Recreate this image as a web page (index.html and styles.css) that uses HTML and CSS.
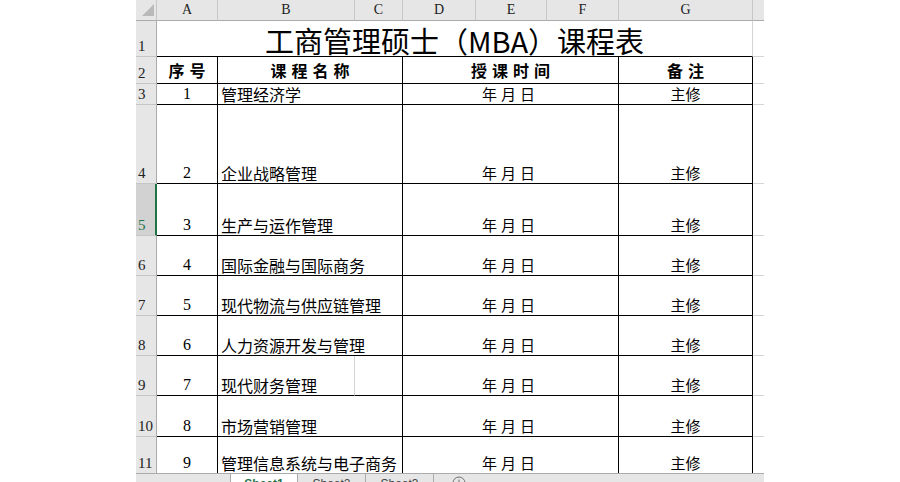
FILE: index.html
```html
<!DOCTYPE html>
<html lang="zh-CN">
<head>
<meta charset="utf-8">
<title>工商管理硕士（MBA）课程表</title>
<link rel="stylesheet" href="styles.css">
</head>
<body>
<div class="page">
  <div class="sheet">
    <div class="grid">
      <div class="corner"><svg width="12" height="12" viewBox="0 0 12 12"><polygon points="12,0 12,12 0,12" fill="#b9b9b9"/></svg></div>
      <div class="ch">A</div><div class="ch">B</div><div class="ch">C</div><div class="ch">D</div><div class="ch">E</div><div class="ch">F</div><div class="ch">G</div><div class="ch ch-h"></div>

      <div class="rh">1</div>
      <div class="title">工商管理硕士（MBA）课程表</div>
      <div class="gh"></div>

      <div class="rh">2</div>
      <div class="c hd">序号</div>
      <div class="c hd span2">课程名称</div>
      <div class="c hd span3">授课时间</div>
      <div class="c hd">备注</div>
      <div class="gh"></div>

      <div class="rh">3</div>
      <div class="c num">1</div>
      <div class="c name span2">管理经济学</div>
      <div class="c date span3">年月日</div>
      <div class="c note">主修</div>
      <div class="gh"></div>

      <div class="rh">4</div>
      <div class="c num">2</div>
      <div class="c name span2">企业战略管理</div>
      <div class="c date span3">年月日</div>
      <div class="c note">主修</div>
      <div class="gh"></div>

      <div class="rh sel">5</div>
      <div class="c num">3</div>
      <div class="c name span2">生产与运作管理</div>
      <div class="c date span3">年月日</div>
      <div class="c note">主修</div>
      <div class="gh"></div>

      <div class="rh">6</div>
      <div class="c num">4</div>
      <div class="c name span2">国际金融与国际商务</div>
      <div class="c date span3">年月日</div>
      <div class="c note">主修</div>
      <div class="gh"></div>

      <div class="rh">7</div>
      <div class="c num">5</div>
      <div class="c name span2">现代物流与供应链管理</div>
      <div class="c date span3">年月日</div>
      <div class="c note">主修</div>
      <div class="gh"></div>

      <div class="rh">8</div>
      <div class="c num">6</div>
      <div class="c name span2">人力资源开发与管理</div>
      <div class="c date span3">年月日</div>
      <div class="c note">主修</div>
      <div class="gh"></div>

      <div class="rh">9</div>
      <div class="c num">7</div>
      <div class="c name grid-right">现代财务管理</div>
      <div class="c"></div>
      <div class="c date span3">年月日</div>
      <div class="c note">主修</div>
      <div class="gh"></div>

      <div class="rh">10</div>
      <div class="c num">8</div>
      <div class="c name span2">市场营销管理</div>
      <div class="c date span3">年月日</div>
      <div class="c note">主修</div>
      <div class="gh"></div>

      <div class="rh">11</div>
      <div class="c num">9</div>
      <div class="c name span2">管理信息系统与电子商务</div>
      <div class="c date span3">年月日</div>
      <div class="c note">主修</div>
      <div class="gh"></div>
    </div>
  </div>
  <div class="tabbar">
    <div class="tab-spacer"></div>
    <div class="tab active">Sheet1</div>
    <div class="tab">Sheet2</div>
    <div class="tab">Sheet3</div>
    <div class="addtab"><svg width="14" height="14" viewBox="0 0 14 14"><circle cx="7" cy="7" r="6" fill="none" stroke="#6f6f6f" stroke-width="1"/><path d="M7 3.5v7M3.5 7h7" stroke="#6f6f6f" stroke-width="1"/></svg></div>
  </div>
</div>
</body>
</html>
```

FILE: styles.css
```css
html, body {
  margin: 0;
  padding: 0;
  background: #ffffff;
}
body {
  width: 900px;
  height: 482px;
  overflow: hidden;
  font-family: "Noto Sans CJK SC", sans-serif;
  color: #000;
}
.page {
  margin-left: 136px;
  width: 628px;
}
.sheet {
  height: 473px;
  overflow: hidden;
}
.grid {
  display: grid;
  grid-template-columns: 21px 61px 137px 48px 73px 71px 72px 134px 11px;
  grid-template-rows: 21px 36px 27px 21px 79px 52px 40px 40px 40px 40px 41px 37px;
}
.grid > div {
  box-sizing: border-box;
  white-space: nowrap;
}
.corner {
  background: #e6e6e6;
  border-right: 1px solid #c6c6c6;
  border-bottom: 1px solid #ababab;
  display: flex;
  align-items: flex-end;
  justify-content: flex-end;
  padding: 0 2px 4px 0;
}
.ch {
  background: #e6e6e6;
  border-right: 1px solid #c6c6c6;
  border-bottom: 1px solid #ababab;
  font-family: "Liberation Serif", serif;
  font-size: 14px;
  line-height: 16px;
  color: #222;
  display: flex;
  align-items: center;
  justify-content: center;
}
.ch-h {
  border-right: none;
}
.rh {
  background: #e6e6e6;
  border-right: 1px solid #ababab;
  border-bottom: 1px solid #c6c6c6;
  font-family: "Liberation Serif", serif;
  font-size: 15px;
  line-height: 16px;
  color: #222;
  display: flex;
  align-items: flex-end;
  padding: 0 0 2px 2px;
}
.rh.sel {
  background: #d2d2d2;
  color: #217346;
  border-right: 2px solid #217346;
}
.title {
  grid-column: span 7;
  border-right: 1px solid #d4d4d4;
  border-bottom: 1px solid #000;
  font-size: 29px;
  line-height: 30px;
  display: flex;
  align-items: flex-end;
  justify-content: center;
  padding-bottom: 1px;
}
.gh {
  border-bottom: 1px solid #d4d4d4;
}
.c {
  border-right: 1px solid #000;
  border-bottom: 1px solid #000;
  display: flex;
  align-items: flex-end;
  padding-bottom: 1px;
  line-height: 18px;
}
.span2 {
  grid-column: span 2;
}
.span3 {
  grid-column: span 3;
}
.grid-right {
  border-right: 1px solid #d4d4d4;
}
.hd {
  font-weight: 700;
  font-size: 16px;
  line-height: 20px;
  letter-spacing: 5px;
  justify-content: center;
  align-items: center;
  padding: 0 0 0 5px;
}
.num {
  font-family: "Liberation Serif", serif;
  font-size: 16px;
  justify-content: center;
}
.name {
  font-size: 16px;
  padding-left: 3px;
}
.date {
  font-size: 15px;
  letter-spacing: 4px;
  justify-content: center;
}
.note {
  font-size: 15px;
  justify-content: center;
}
.tabbar {
  height: 9px;
  overflow: hidden;
  background: #e6e6e6;
  border-top: 1px solid #ababab;
  display: flex;
  align-items: flex-start;
  font-family: "Liberation Sans", sans-serif;
  font-size: 12px;
  line-height: 14px;
  color: #444;
}
.tab-spacer {
  width: 94px;
}
.tab {
  width: 68px;
  box-sizing: border-box;
  height: 24px;
  border-right: 1px solid #ababab;
  text-align: center;
  padding-top: 3px;
}
.tab.active {
  background: #fff;
  border-left: 1px solid #ababab;
  color: #217346;
  font-weight: 700;
}
.addtab {
  width: 50px;
  display: flex;
  justify-content: center;
  padding-top: 2px;
}
```
